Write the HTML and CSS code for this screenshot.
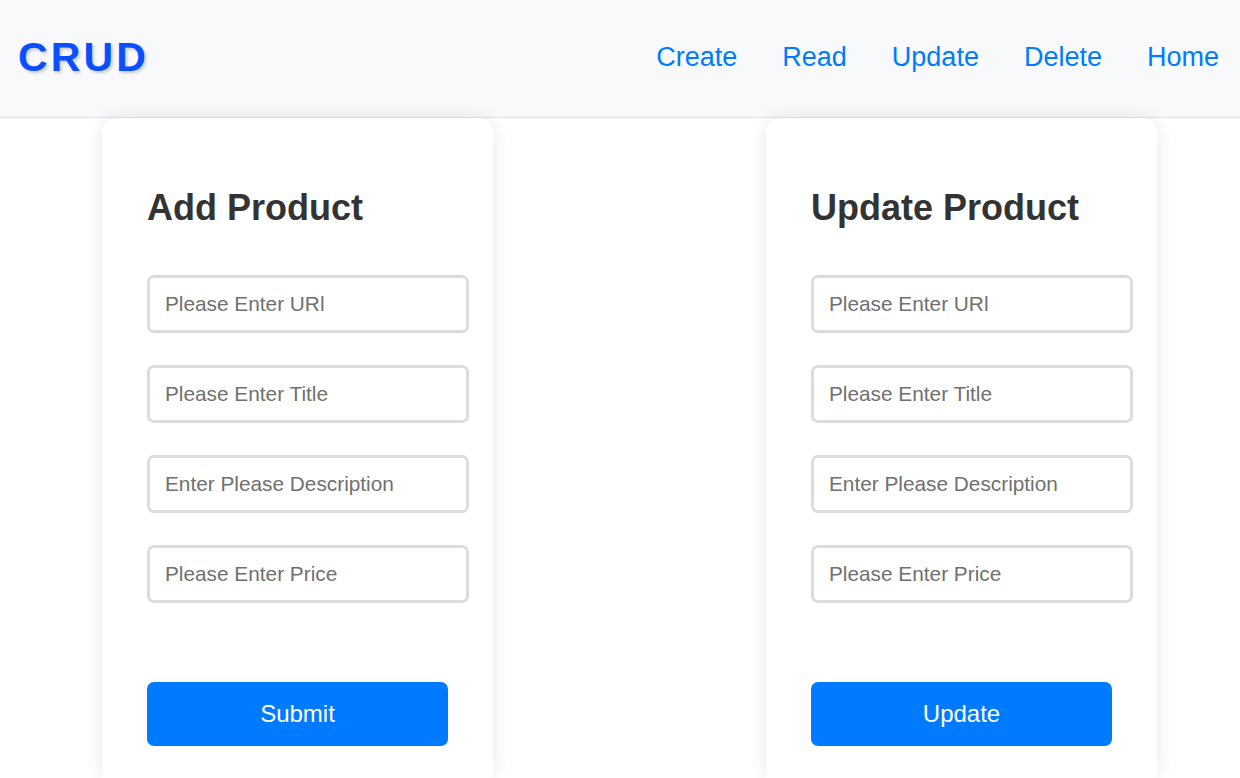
FILE: index.html
```
<!DOCTYPE html>
<html lang="en">
<head>
<meta charset="utf-8">
<title>CRUD</title>
<link rel="stylesheet" href="styles.css">
</head>
<body>
<header class="navbar">
  <div class="brand">CRUD</div>
  <nav class="nav">
    <a class="nav-link" href="#">Create</a>
    <a class="nav-link" href="#">Read</a>
    <a class="nav-link" href="#">Update</a>
    <a class="nav-link" href="#">Delete</a>
    <a class="nav-link" href="#">Home</a>
  </nav>
</header>
<main class="content">
  <section class="card">
    <h2 class="card-title">Add Product</h2>
    <form class="form">
      <input class="field" type="text" placeholder="Please Enter URl">
      <input class="field" type="text" placeholder="Please Enter Title">
      <input class="field" type="text" placeholder="Enter Please Description">
      <input class="field" type="text" placeholder="Please Enter Price">
      <button class="btn" type="button">Submit</button>
    </form>
  </section>
  <section class="card">
    <h2 class="card-title">Update Product</h2>
    <form class="form">
      <input class="field" type="text" placeholder="Please Enter URl">
      <input class="field" type="text" placeholder="Please Enter Title">
      <input class="field" type="text" placeholder="Enter Please Description">
      <input class="field" type="text" placeholder="Please Enter Price">
      <button class="btn" type="button">Update</button>
    </form>
  </section>
</main>
</body>
</html>
```
FILE: styles.css
```
* { box-sizing: border-box; }
html, body { margin: 0; padding: 0; }
body {
  font-family: "Liberation Sans", Arial, sans-serif;
  background: #ffffff;
  overflow: hidden;
  height: 778px;
}
.navbar {
  height: 118px;
  background: #f8f9fa;
  border-bottom: 1px solid #e0e2e5;
  display: flex;
  align-items: center;
  justify-content: space-between;
  padding: 0 0 2px 18px;
}
.brand {
  font-size: 41px;
  font-weight: 700;
  letter-spacing: 3.1px;
  color: #0a4fff;
  text-shadow: 2px 2px 3px rgba(0, 0, 0, 0.2);
}
.nav {
  display: flex;
  align-items: center;
  padding-right: 21px;
  gap: 45px;
}
.nav-link {
  font-size: 27px;
  color: #007bff;
  text-decoration: none;
}
.content {
  display: flex;
  align-items: flex-start;
  gap: 273px;
  padding-left: 102px;
}
.card {
  width: 391px;
  height: 660px;
  background: #fff;
  border-radius: 14px 14px 0 0;
  box-shadow: 0 0 18px rgba(0, 0, 0, 0.09);
  padding: 69px 24px 0 45px;
}
.card-title {
  margin: 0 0 47px;
  font-size: 36px;
  font-weight: 700;
  color: #333;
  line-height: 41px;
}
.form {
  display: flex;
  flex-direction: column;
  align-items: flex-start;
  gap: 32px;
}
.field {
  width: 322px;
  height: 58px;
  border: 3px solid #dcdcdc;
  border-radius: 7px;
  padding: 0 15px;
  font-family: "Liberation Sans", Arial, sans-serif;
  font-size: 20.8px;
  color: #333;
  background: #fff;
  outline: none;
}
.field::placeholder { color: #707070; }
.btn {
  margin-top: 47px;
  width: 301px;
  height: 64px;
  border: none;
  border-radius: 7px;
  background: #007bff;
  color: #fff;
  font-family: "Liberation Sans", Arial, sans-serif;
  font-size: 24px;
}
```
